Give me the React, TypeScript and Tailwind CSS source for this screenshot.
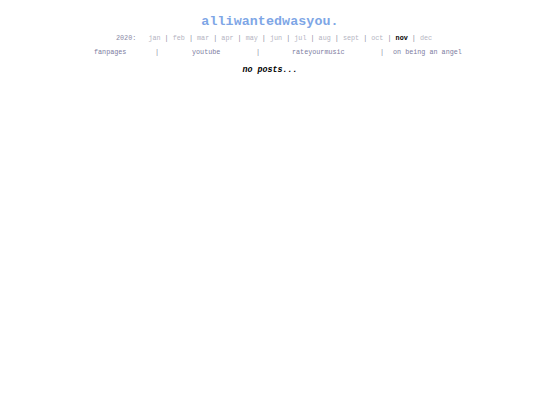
const months = ['jan', 'feb', 'mar', 'apr', 'may', 'jun', 'jul', 'aug', 'sept', 'oct', 'nov', 'dec'];

const links = [
  { label: 'fanpages', w: 'w-[61px]' },
  { label: '|', w: 'w-[37px]', sep: true },
  { label: 'youtube', w: 'w-[64px]' },
  { label: '|', w: 'w-[36px]', sep: true },
  { label: 'rateyourmusic', w: 'w-[88px]' },
  { label: '|', w: 'w-[13px]', sep: true },
  { label: 'on being an angel', w: '' },
];

export default function App() {
  return (
    <div className="min-h-[405px] w-[540px] bg-white font-['Liberation_Mono',monospace]">
      {/* Header */}
      <h1 className="pt-[14px] text-center text-[13.3px] font-bold leading-[16px] tracking-[0.1px] text-[#7ea6e6]">
        alliwantedwasyou.
      </h1>

      {/* Archive months */}
      <div className="mt-[3px] flex pl-[116px] text-[6.75px] leading-[10px] whitespace-pre">
        <span className="text-[#8a8aa6]">2020:   </span>
        {months.map((m, i) => (
          <span key={m}>
            <span className={m === 'nov' ? 'font-bold text-black' : 'text-[#b4b4c2]'}>{m}</span>
            {i < months.length - 1 && <span className="text-[#8a8a9a]"> | </span>}
          </span>
        ))}
      </div>

      {/* Links */}
      <div className="mt-[4px] flex pl-[94px] text-[6.75px] leading-[10px] text-[#7c7ca0]">
        {links.map((l, i) => (
          <span key={i} className={`${l.w} ${l.sep ? 'text-[#8a8a9a]' : ''}`}>
            {l.label}
          </span>
        ))}
      </div>

      {/* Posts */}
      <p className="mt-[7px] text-center text-[8.3px] leading-[12px] font-bold italic text-black">
        no posts...
      </p>
    </div>
  );
}
